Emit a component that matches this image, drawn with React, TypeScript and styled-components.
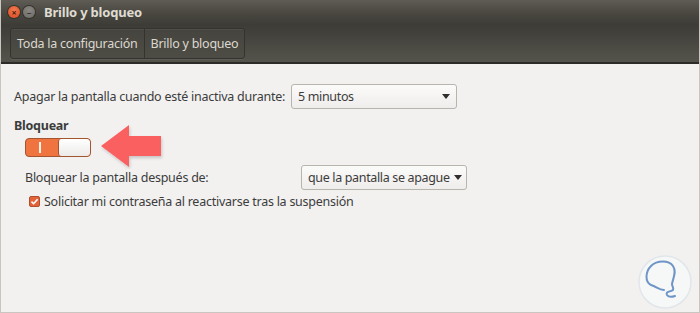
import React, { FC } from 'react';
import styled, { createGlobalStyle } from 'styled-components';

const GlobalStyle = createGlobalStyle`
    html, body {
        margin: 0;
        padding: 0;
        background: #f2f1f0;
    }
    body {
        font-family: 'Noto Sans', 'Open Sans', sans-serif;
    }
`;

const Window = styled.div`
    position: relative;
    width: 700px;
    height: 313px;
    display: flex;
    flex-direction: column;
    box-sizing: border-box;
    border-left: 1px solid #c9c6c2;
    border-right: 1px solid #c9c6c2;
    border-bottom: 1px solid #c9c6c2;
    overflow: hidden;
`;

const Header = styled.div`
    height: 62px;
    display: flex;
    flex-direction: column;
    background: linear-gradient(180deg, #5f5b55 0px, #48463f 14px, #3d3c37 25px, #46453f 40px, #54534b 61px);
    border-bottom: 2px solid #2c2b28;
`;

const TitleBar = styled.div`
    height: 24px;
    display: flex;
    align-items: center;
    padding-left: 7px;
    gap: 3px;
`;

const WinButton = styled.span<{ $close?: boolean }>`
    width: 12px;
    height: 12px;
    border-radius: 50%;
    display: flex;
    align-items: center;
    justify-content: center;
    background: ${(p) => (p.$close ? 'radial-gradient(circle at 50% 35%, #f37a50, #d9481d)' : 'radial-gradient(circle at 50% 35%, #8a8781, #6c6a65)')};
    box-shadow: 0 0 0 1px #34322e;
    font-size: 9px;
    line-height: 1;
    font-weight: bold;
    color: ${(p) => (p.$close ? '#4b1d0c' : '#3a3935')};
`;

const Title = styled.span`
    margin-left: 6px;
    color: #dfdbd2;
    font-size: 13px;
    font-weight: bold;
    letter-spacing: -0.2px;
`;

const Toolbar = styled.div`
    flex: 1;
    display: flex;
    align-items: center;
    padding-left: 9px;
`;

const Crumbs = styled.div`
    display: flex;
    height: 29px;
    border: 1px solid #34332f;
    border-radius: 3px;
    box-shadow: inset 0 1px 0 rgba(255, 255, 255, 0.06), 0 1px 0 rgba(255, 255, 255, 0.07);
    background: linear-gradient(180deg, #45443e, #4d4c45);
`;

const Crumb = styled.div`
    display: flex;
    align-items: center;
    padding: 0 6px;
    color: #dcd8cf;
    font-size: 12.5px;
    letter-spacing: -0.25px;
    & + & {
        border-left: 1px solid #34332f;
    }
`;

const Content = styled.div`
    flex: 1;
    padding: 20px 0 0 13px;
    display: flex;
    flex-direction: column;
    color: #3c3c3c;
    font-size: 12.5px;
    letter-spacing: -0.25px;
`;

const Row = styled.div<{ $indent?: number; $gap?: number; $top?: number }>`
    display: flex;
    align-items: center;
    padding-left: ${(p) => p.$indent ?? 0}px;
    margin-top: ${(p) => p.$top ?? 0}px;
    gap: ${(p) => p.$gap ?? 6}px;
    white-space: nowrap;
`;

const Label = styled.span<{ $w?: number }>`
    width: ${(p) => (p.$w ? `${p.$w}px` : 'auto')};
`;

const Combo = styled.div<{ $w: number }>`
    width: ${(p) => p.$w}px;
    height: 25px;
    box-sizing: border-box;
    border: 1px solid #b8b4ae;
    border-radius: 3px;
    background: linear-gradient(180deg, #fbfbfa, #efedeb);
    display: flex;
    align-items: center;
    justify-content: space-between;
    gap: 4px;
    padding: 0 6px;
    color: #3c3c3c;
    white-space: nowrap;
    letter-spacing: -0.35px;
`;

const Caret = styled.span`
    flex: none;
    width: 0;
    height: 0;
    border-left: 4px solid transparent;
    border-right: 4px solid transparent;
    border-top: 5px solid #2e2e2e;
`;

const SectionTitle = styled.div`
    margin-top: 8px;
    font-weight: bold;
    color: #3c3c3c;
`;

const SwitchRow = styled.div`
    display: flex;
    align-items: center;
    padding-left: 11px;
    margin-top: 2px;
    height: 22px;
`;

const Switch = styled.div`
    width: 66px;
    height: 19px;
    box-sizing: border-box;
    border: 1px solid #a3552f;
    border-radius: 4px;
    background: #f0743f;
    display: flex;
    align-items: center;
    overflow: hidden;
`;

const OnMark = styled.span`
    width: 2px;
    height: 11px;
    background: #fff3ec;
    margin-left: 13px;
`;

const Knob = styled.span`
    margin-left: auto;
    width: 32px;
    height: 100%;
    box-sizing: border-box;
    border-left: 1px solid #a3552f;
    border-radius: 3px;
    background: linear-gradient(180deg, #ffffff, #ecebe9);
`;

const Arrow = styled.svg`
    flex: none;
    margin: -11px 0 -11px 10px;
`;

const Check = styled.span`
    width: 11px;
    height: 11px;
    border-radius: 2px;
    background: #e2643a;
    border: 1px solid #b24e2b;
    box-sizing: border-box;
    display: flex;
    align-items: center;
    justify-content: center;
`;

const Logo = styled.svg`
    position: absolute;
    right: 6px;
    bottom: 2px;
`;

const App: FC = () => {
    return (
        <>
            <GlobalStyle />
            <Window>
                <Header>
                    <TitleBar>
                        <WinButton $close>×</WinButton>
                        <WinButton>–</WinButton>
                        <Title>Brillo y bloqueo</Title>
                    </TitleBar>
                    <Toolbar>
                        <Crumbs>
                            <Crumb>Toda la configuración</Crumb>
                            <Crumb>Brillo y bloqueo</Crumb>
                        </Crumbs>
                    </Toolbar>
                </Header>
                <Content>
                    <Row>
                        <Label>Apagar la pantalla cuando esté inactiva durante:</Label>
                        <Combo $w={166}>
                            <span>5 minutos</span>
                            <Caret />
                        </Combo>
                    </Row>
                    <SectionTitle>Bloquear</SectionTitle>
                    <SwitchRow>
                        <Switch>
                            <OnMark />
                            <Knob />
                        </Switch>
                        <Arrow width="64" height="44" viewBox="0 0 64 44">
                            <defs>
                                <filter id="sh" x="-20%" y="-20%" width="140%" height="150%">
                                    <feDropShadow dx="1" dy="2" stdDeviation="1.5" floodColor="#000" floodOpacity="0.18" />
                                </filter>
                            </defs>
                            <polygon points="0,21 28,0 28,11 60,11 60,31 28,31 28,42" fill="#fb6060" filter="url(#sh)" />
                        </Arrow>
                    </SwitchRow>
                    <Row $indent={11} $top={7}>
                        <Label $w={270}>Bloquear la pantalla después de:</Label>
                        <Combo $w={166}>
                            <span>que la pantalla se apague</span>
                            <Caret />
                        </Combo>
                    </Row>
                    <Row $indent={15} $gap={4} $top={3}>
                        <Check>
                            <svg width="9" height="9" viewBox="0 0 9 9">
                                <path d="M1.5 4.6 L3.6 6.7 L7.6 2.2" stroke="#fff" strokeWidth="1.6" fill="none" />
                            </svg>
                        </Check>
                        <Label>Solicitar mi contraseña al reactivarse tras la suspensión</Label>
                    </Row>
                </Content>
                <Logo width="56" height="56" viewBox="0 0 56 56">
                    <circle cx="28" cy="28" r="26" fill="#f6f8f7" stroke="#e0e6ea" strokeWidth="1.5" />
                    <path
                        d="M27 36 C22 36 20 33 14 31 C8 28 8 18 14 12 C20 6 32 6 36 12 C40 18 36 24 35 30 C35 33 37 33 36 36 C34 38 28 37 30 41 C32 44 38 42 38 42"
                        stroke="#6f95c8"
                        strokeWidth="2"
                        fill="none"
                        strokeLinecap="round"
                    />
                </Logo>
            </Window>
        </>
    );
};

export default App;
